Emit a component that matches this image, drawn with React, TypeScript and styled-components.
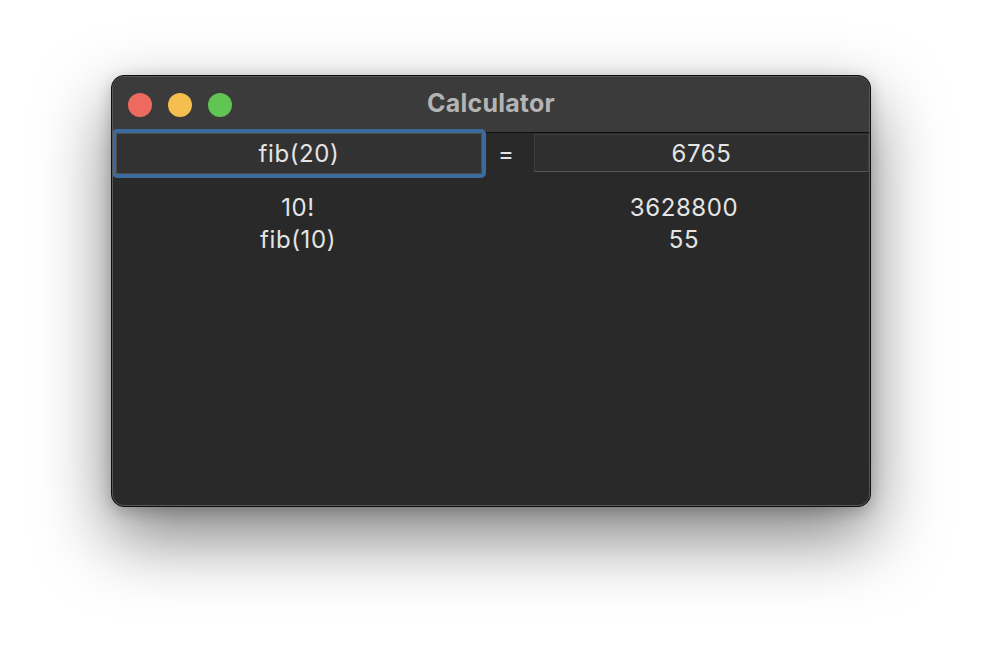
import React from "react";
import styled, { createGlobalStyle } from "styled-components";

const GlobalStyle = createGlobalStyle`
  html, body {
    margin: 0;
    padding: 0;
    background: #ffffff;
    font-family: Inter, "Liberation Sans", sans-serif;
  }
`;

const history = [
  { expr: "10!", value: "3628800" },
  { expr: "fib(10)", value: "55" },
];

export default function App() {
  return (
    <>
      <GlobalStyle />
      <Page>
        <Window>
          <Frame>
            <TitleBar>
              <Lights>
                <Light color="#ee6a5e" />
                <Light color="#f5bf4f" />
                <Light color="#61c554" />
              </Lights>
              <Title>Calculator</Title>
            </TitleBar>
            <Content>
              <InputRow>
                <Field value="fib(20)" readOnly />
                <Equals>=</Equals>
                <Result>6765</Result>
              </InputRow>
              <History>
                {history.map((row) => (
                  <React.Fragment key={row.expr}>
                    <Cell>{row.expr}</Cell>
                    <Cell>{row.value}</Cell>
                  </React.Fragment>
                ))}
              </History>
            </Content>
          </Frame>
        </Window>
      </Page>
    </>
  );
}

const Page = styled.div`
  width: 982px;
  height: 654px;
  display: flex;
  justify-content: center;
  padding-top: 75px;
  box-sizing: border-box;
`;

const Window = styled.div`
  width: 760px;
  height: 432px;
  box-sizing: border-box;
  border: 1px solid #0e0e0e;
  border-radius: 13px;
  box-shadow: 0 30px 70px rgba(0, 0, 0, 0.5), 0 4px 16px rgba(0, 0, 0, 0.22);
  background: #0e0e0e;
`;

const Frame = styled.div`
  height: 100%;
  box-sizing: border-box;
  border: 1px solid #585858;
  border-radius: 12px;
  overflow: hidden;
  display: flex;
  flex-direction: column;
  background: #292929;
`;

const TitleBar = styled.div`
  position: relative;
  height: 55px;
  flex-shrink: 0;
  background: #3b3b3b;
  border-bottom: 1px solid #111111;
  display: flex;
  align-items: center;
  justify-content: center;
`;

const Lights = styled.div`
  position: absolute;
  left: 15px;
  top: 16px;
  display: flex;
  gap: 16px;
`;

const Light = styled.span<{ color: string }>`
  width: 24px;
  height: 24px;
  border-radius: 50%;
  background: ${(p) => p.color};
`;

const Title = styled.div`
  font-size: 25px;
  font-weight: 700;
  color: #b4b4b4;
  letter-spacing: 0.2px;
  margin-top: -3px;
`;

const Content = styled.div`
  flex: 1;
  display: flex;
  flex-direction: column;
`;

const InputRow = styled.div`
  position: relative;
  z-index: 1;
  display: grid;
  grid-template-columns: 374px 48px 1fr;
  align-items: center;
  height: 49px;
  margin-top: -4px;
  margin-left: -1px;
`;

const Field = styled.input`
  box-sizing: border-box;
  width: 100%;
  height: 49px;
  background: #323232;
  border: 4px solid #3b6a9c;
  box-shadow: inset 0 0 0 1px #4d4d4d;
  outline: none;
  border-radius: 5px;
  color: #e4e4e4;
  font-family: Inter, "Liberation Sans", sans-serif;
  font-size: 24px;
  letter-spacing: 0.6px;
  text-align: center;
  padding: 0;
`;

const Equals = styled.div`
  text-align: center;
  color: #e4e4e4;
  font-size: 24px;
  padding-right: 8px;
`;

const Result = styled.div`
  box-sizing: border-box;
  height: 38px;
  margin-top: -1px;
  background: #2f2f2f;
  border: 1px solid #3e3e3e;
  border-bottom-color: #555555;
  color: #e4e4e4;
  font-size: 24px;
  letter-spacing: 0.6px;
  display: flex;
  align-items: center;
  justify-content: center;
`;

const History = styled.div`
  display: grid;
  grid-template-columns: 370px 1fr;
  column-gap: 16px;
  margin-top: 14px;
  line-height: 32px;
`;

const Cell = styled.div`
  text-align: center;
  color: #e4e4e4;
  font-size: 24px;
  letter-spacing: 0.6px;
`;
